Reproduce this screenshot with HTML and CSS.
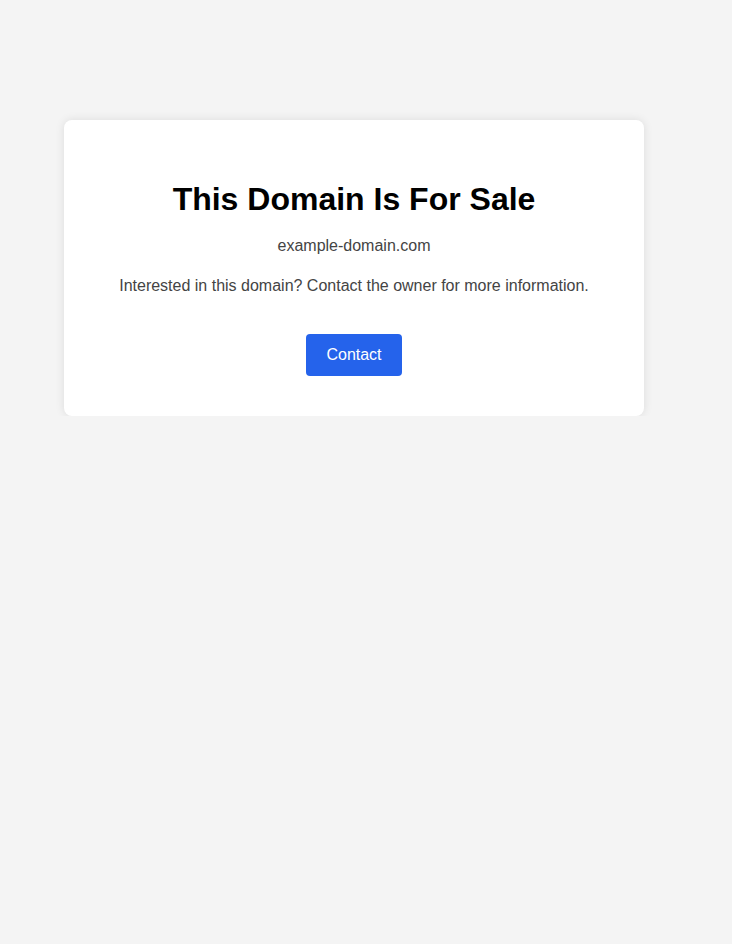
FILE: index.html
```html
<!DOCTYPE html>
<html lang="en">
<head>
<meta charset="utf-8">
<title>This Domain Is For Sale</title>
<link rel="stylesheet" href="styles.css">
</head>
<body>
  <main class="card">
    <h1 class="title">This Domain Is For Sale</h1>
    <p class="domain">example-domain.com</p>
    <p class="info">Interested in this domain? Contact the owner for more information.</p>
    <div class="actions">
      <button class="contact-btn" type="button">Contact</button>
    </div>
  </main>
</body>
</html>
```
FILE: styles.css
```css
html, body {
  margin: 0;
  padding: 0;
}
body {
  background: #f4f4f4;
  font-family: "Liberation Sans", Arial, sans-serif;
  font-size: 16px;
  line-height: 1.5;
  color: #444;
  padding: 120px 0 0 64px;
}
.card {
  width: 500px;
  padding: 40px;
  background: #fff;
  border-radius: 8px;
  box-shadow: 0 0 10px rgba(0, 0, 0, 0.1);
  text-align: center;
}
.title {
  margin: 20px 0 16px;
  font-size: 32px;
  line-height: 1.2;
  font-weight: bold;
  color: #000;
}
.domain,
.info {
  margin: 16px 0;
}
.actions {
  margin: 0;
}
.contact-btn {
  margin-top: 20px;
  display: inline-block;
  padding: 12px 20px;
  border: none;
  border-radius: 4px;
  background: #2563eb;
  color: #fff;
  font-family: "Liberation Sans", Arial, sans-serif;
  font-size: 16px;
  line-height: normal;
  cursor: pointer;
}
```
